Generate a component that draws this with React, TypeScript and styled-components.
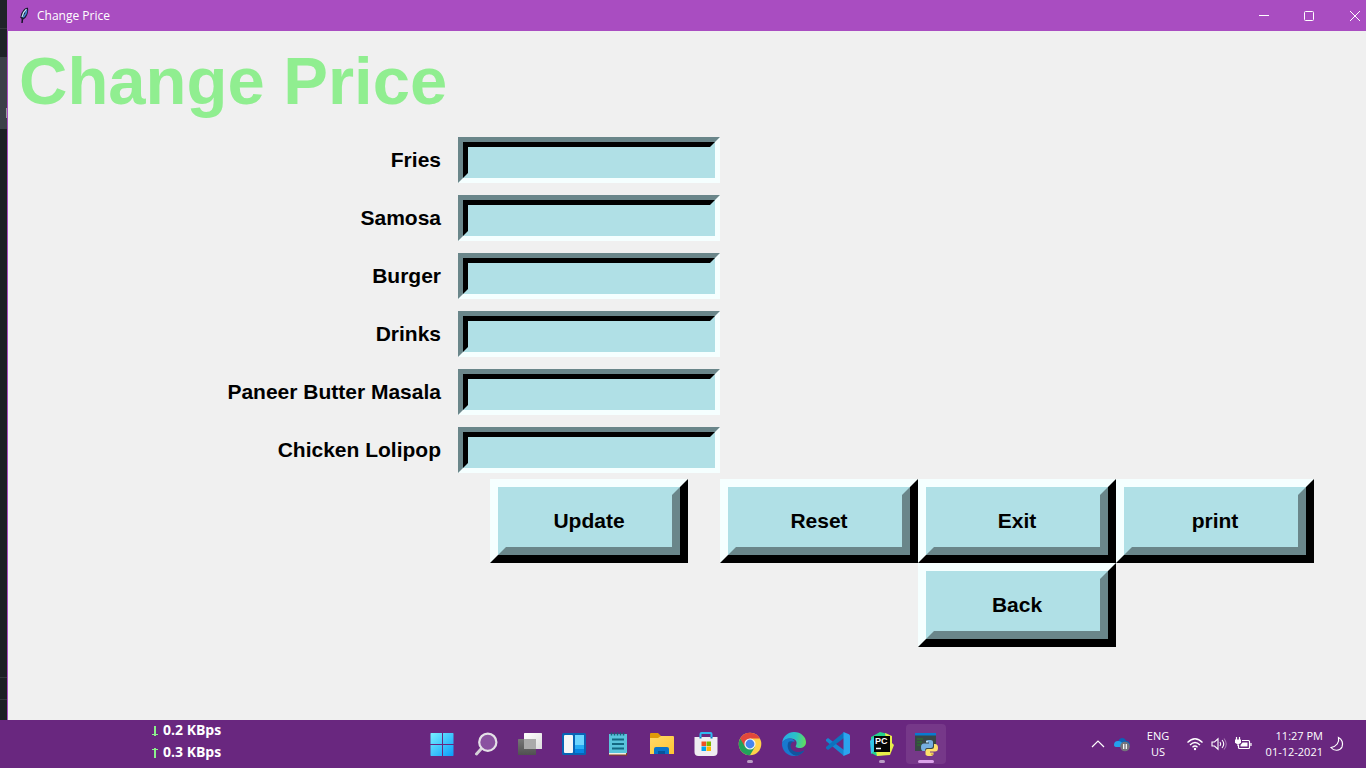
import React from "react";
import styled, { createGlobalStyle } from "styled-components";

const GlobalStyle = createGlobalStyle`
  *, *::before, *::after { box-sizing: border-box; }
  body { margin: 0; font-family: "Open Sans", "Noto Sans", sans-serif; }
  button { font: inherit; color: inherit; cursor: pointer; }
`;

const powder = "#b0e0e6";
const shade = "#6a868a";
const light = "#f5ffff";

const Screen = styled.div`
  display: flex;
  flex-direction: column;
  min-height: 100vh;
  overflow-x: hidden;
`;

const Workspace = styled.div`
  display: flex;
  flex: 1;
`;

const EditorEdge = styled.div`
  display: flex;
  flex-direction: column;
  flex: 0 0 7px;
  background: #1c1f24;
`;

const EdgeBand = styled.div<{ $height?: number; $tone: string; $line?: boolean }>`
  flex: ${(p) => (p.$height ? `0 0 ${p.$height}px` : "1")};
  background: ${(p) => p.$tone};
  border-bottom: 1px solid ${(p) => (p.$line ? "#33363c" : p.$tone)};
`;

const EdgeMark = styled.div`
  width: 1px;
  height: 10px;
  margin: 51px 0 0 6px;
  background: #9b9da2;
`;

const AppWindow = styled.main`
  display: flex;
  flex-direction: column;
  flex: 1;
  min-width: 0;
  background: #f0f0f0;
  border-left: 1px solid #a94dc1;
`;

const TitleBar = styled.header`
  display: flex;
  align-items: center;
  height: 31px;
  padding-left: 10px;
  background: #a94dc1;
  color: #fff;
`;

const WindowName = styled.span`
  flex: 1;
  margin-left: 8px;
  font-size: 12px;
  line-height: 16px;
`;

const WindowButton = styled.button<{ $width: number }>`
  display: flex;
  align-items: center;
  justify-content: center;
  width: ${(p) => p.$width}px;
  height: 31px;
  padding: 0;
  border: 0;
  background: transparent;
`;

const PriceForm = styled.form`
  display: grid;
  grid-template-columns: minmax(0, 450px) 262px repeat(3, 198px);
  font-family: "Liberation Sans", Arial, sans-serif;
  font-weight: bold;
  color: #000;
`;

const Heading = styled.h1`
  grid-column: 1 / -1;
  margin: 0;
  padding-left: 11px;
  font-size: 67px;
  line-height: 100px;
  color: #90ee90;
`;

const FieldLabel = styled.label`
  grid-column: 1;
  padding-right: 17px;
  font-size: 21px;
  line-height: 58px;
  text-align: right;
`;

const SunkenFrame = styled.div`
  grid-column: 2;
  display: flex;
  height: 46px;
  margin: 6px 0;
  border: 5px solid;
  border-color: ${shade} ${light} ${light} ${shade};
`;

const Entry = styled.input`
  flex: 1;
  min-width: 0;
  padding: 0 2px;
  border: 5px solid;
  border-color: #000 ${powder} ${powder} #000;
  border-radius: 0;
  background: ${powder};
  font: inherit;
  font-size: 21px;
  outline: none;
`;

const RaisedButton = styled.button<{ $column: number }>`
  grid-column: ${(p) => p.$column};
  justify-self: center;
  display: flex;
  width: 198px;
  height: 84px;
  padding: 0;
  border: 8px solid;
  border-color: ${light} #000 #000 ${light};
  background: ${powder};
`;

const ButtonFace = styled.span`
  display: flex;
  flex: 1;
  align-self: stretch;
  align-items: center;
  justify-content: center;
  border: 8px solid;
  border-color: ${powder} ${shade} ${shade} ${powder};
  font-size: 21px;
`;

const Taskbar = styled.footer`
  display: grid;
  grid-template-columns: 1fr auto 1fr;
  height: 48px;
  background: #69277f;
  color: #fff;
`;

const NetworkSpeed = styled.div`
  padding-left: 151px;
  font-size: 14px;
  font-weight: bold;
  line-height: 22px;
`;

const SpeedLine = styled.div`
  display: flex;
  align-items: center;
  height: 22px;
  padding-bottom: 2px;
  gap: 4px;
`;

const Apps = styled.nav`
  display: flex;
  padding-left: 2px;
`;

const AppButton = styled.button<{ $active?: boolean }>`
  position: relative;
  display: flex;
  align-items: center;
  justify-content: center;
  width: 44px;
  height: 48px;
  padding: 0;
  border: 0;
  background: transparent;

  &::before {
    content: "";
    display: ${(p) => (p.$active ? "block" : "none")};
    position: absolute;
    inset: 4px 2px 4px 2px;
    border-radius: 4px;
    background: #763889;
    z-index: 0;
  }

  svg { position: relative; }
`;

const RunningMark = styled.span<{ $active?: boolean }>`
  position: absolute;
  bottom: 5px;
  left: 50%;
  width: ${(p) => (p.$active ? 16 : 6)}px;
  height: 3px;
  border-radius: 2px;
  transform: translateX(-50%);
  background: ${(p) => (p.$active ? "#dca2ea" : "#b99cc3")};
`;

const Tray = styled.div`
  display: flex;
  align-items: center;
  justify-content: flex-end;
  padding-right: 15px;
`;

const TrayButton = styled.button<{ $width: number }>`
  display: flex;
  align-items: center;
  justify-content: center;
  width: ${(p) => p.$width}px;
  height: 48px;
  padding: 0;
  border: 0;
  background: transparent;
`;

const TrayText = styled.div<{ $align: "center" | "right"; $width: number }>`
  width: ${(p) => p.$width}px;
  font-size: 11px;
  line-height: 16px;
  text-align: ${(p) => p.$align};
  white-space: nowrap;
`;

const Feather = () => (
  <svg width="11" height="17" viewBox="0 0 11 17" aria-hidden="true">
    <path d="M9.500 1 6.500 2.200 4 6 2.800 10.500l1.200 1.300V16l.8-3.800 2.500-1.700L9 7l.7-4z" fill="#1c2340" stroke="#101020" strokeWidth=".9" />
    <path d="M8.500 2.200 5.600 5.500 4 10" stroke="#c4e7fa" strokeWidth="1.300" fill="none" />
    <path d="M8.700 3.400 7.700 7 5.200 10.400" stroke="#4688dc" strokeWidth="1.500" fill="none" />
  </svg>
);

const Arrow = ({ up }: { up?: boolean }) => (
  <svg width="8" height="12" viewBox="0 0 8 12" aria-hidden="true">
    <path
      d={up ? "M3 12V4H1V3h2V2h2v1h2v1H5v8z" : "M3 2v8H1v1h2v1h2v-1h2v-1H5V2z"}
      fill="#8cf08c"
    />
  </svg>
);

const StartIcon = () => (
  <svg width="24" height="24" viewBox="0 0 24 24" aria-hidden="true">
    <defs>
      <linearGradient id="start" x1="0" y1="0" x2="24" y2="24" gradientUnits="userSpaceOnUse">
        <stop stopColor="#7cf3ff" />
        <stop offset="1" stopColor="#089bfa" />
      </linearGradient>
    </defs>
    <path d="M1 1h11v11H.5V1.500zM13 1h10l.5.500V12H13zM.5 13H12v11H1l-.5-.5zM13 13h10.500v10.500l-.5.500H13z" fill="url(#start)" />
  </svg>
);

const SearchIcon = () => (
  <svg width="24" height="24" viewBox="0 0 24 24" aria-hidden="true">
    <path d="M7.500 16.500 2.500 22" stroke="#d5d0d8" strokeWidth="3" strokeLinecap="round" />
    <circle cx="13.800" cy="10.200" r="8.600" fill="#8a52a0" stroke="#e4e1e7" strokeWidth="2.200" />
  </svg>
);

const TaskViewIcon = () => (
  <svg width="26" height="24" viewBox="0 0 26 24" aria-hidden="true">
    <defs>
      <linearGradient id="tvback" x2="0" y2="1">
        <stop stopColor="#777" />
        <stop offset="1" stopColor="#505050" />
      </linearGradient>
      <linearGradient id="tvfront" x2="1" y2="1">
        <stop stopColor="#fff" />
        <stop offset="1" stopColor="#dcdcdc" />
      </linearGradient>
    </defs>
    <rect x="7" y="1" width="18" height="16" rx=".6" fill="url(#tvfront)" />
    <rect x="1" y="7" width="18" height="16" rx=".6" fill="url(#tvback)" />
    <path d="M7 7h12v10H7z" fill="#aaa" />
  </svg>
);

const WidgetsIcon = () => (
  <svg width="24" height="24" viewBox="0 0 24 24" aria-hidden="true">
    <rect y="1" width="24" height="22" rx="1.500" fill="#0864b5" />
    <rect x="2" y="3" width="9" height="18" rx="1" fill="#f6f6f6" />
    <path d="M13 3h9v10h-9z" fill="#6cd5ff" />
    <path d="M13 13h9v4h-9z" fill="#25adf5" />
    <path d="M13 17h9v4h-9z" fill="#0685e4" />
  </svg>
);

const NotepadIcon = () => (
  <svg width="20" height="24" viewBox="0 0 20 24" aria-hidden="true">
    <path d="M1 20h18v3.500H1z" fill="#8b4916" />
    <path d="M1 20h17v2.500H1z" fill="#f2eee8" />
    <path d="M1 2h18v19H1z" fill="#59c5dc" />
    <path d="M3.500.500v3M6.500.500v3M9.500.500v3M12.500.500v3M15.500.500v3" stroke="#17627a" strokeWidth="1.500" />
    <path d="M4 7.500h12M4 12h12M4 16.500h12" stroke="#136982" strokeWidth="1.800" />
  </svg>
);

const FolderIcon = () => (
  <svg width="26" height="24" viewBox="0 0 26 24" aria-hidden="true">
    <defs>
      <linearGradient id="folder" x2="1" y2="1">
        <stop stopColor="#ffda69" />
        <stop offset="1" stopColor="#ffc432" />
      </linearGradient>
    </defs>
    <path d="M1 2q0-1 1-1h7l3 3v8H1z" fill="#e09a08" />
    <path d="M1 6h8l3-2h12q1 0 1 1v17H1z" fill="url(#folder)" />
    <path d="M5 22v-5q0-2 2-2h11q2 0 2 2v5z" fill="#0974ca" />
    <path d="M9 19h7v3H9z" fill="#07539c" />
  </svg>
);

const StoreIcon = () => (
  <svg width="24" height="24" viewBox="0 0 24 24" aria-hidden="true">
    <path d="M6.500 6V2q0-1 1-1h9q1 0 1 1v4" fill="none" stroke="#2fb8f0" strokeWidth="2" />
    <path d="M.500 5h23v15q0 4-4 4h-15q-4 0-4-4z" fill="#efedf1" />
    <path d="M7.500 9.500H12V14H7.500z" fill="#f05124" />
    <path d="M12.500 9.500H17V14h-4.500z" fill="#7cb700" />
    <path d="M7.500 14.500H12V19H7.500z" fill="#00a3ee" />
    <path d="M12.500 14.500H17V19h-4.500z" fill="#ffb800" />
    <path d="M6.500 5v1.500M17.500 5v1.500" stroke="#087dc1" strokeWidth="2" />
  </svg>
);

const ChromeIcon = () => (
  <svg width="24" height="24" viewBox="0 0 24 24" aria-hidden="true">
    <circle cx="12" cy="12" r="11.300" fill="#fed14a" />
    <path d="M12 12 2.200 6.400A11.300 11.300 0 0 0 12 23.300l5-8.600z" fill="#22a25b" />
    <path d="M12 6.500h9.900A11.300 11.300 0 0 0 2.200 6.400L7 14.700z" fill="#e1483b" />
    <circle cx="12" cy="12" r="5.600" fill="#f4f4f4" />
    <circle cx="12" cy="12" r="4.400" fill="#4685ef" />
  </svg>
);

const EdgeIcon = () => (
  <svg width="26" height="26" viewBox="0 0 26 26" aria-hidden="true">
    <defs>
      <linearGradient id="edgetop" x1="1" y1="8" x2="25" y2="12" gradientUnits="userSpaceOnUse">
        <stop stopColor="#28a9e9" />
        <stop offset=".55" stopColor="#2bc2c4" />
        <stop offset="1" stopColor="#65df58" />
      </linearGradient>
    </defs>
    <path d="M1 12C2 5 7 1 13 1c7 0 12 5 12 10 0 4-3 6-6.500 6-3 0-4.500-1-3.500-2.500 2-4-1-7-5-7C6 7.500 2 9.500 1 12z" fill="url(#edgetop)" />
    <path d="M1 12c1-3 5-5 8-4.500 2 0 4 1.300 5 3-3-.5-5 1.500-5 4.500 0 4 4 7 8.500 6.500 2 0 4-.8 5.500-2C21 23 17 25 13 25 6 25 .500 19 1 12z" fill="#1879cf" />
    <path d="M7.500 11C5 16 8 23 15 24.800c4-.5 7-3 8.500-5.600-7 4-14 .8-14-4.200 0-2 .8-3.500 2.500-4.300-1.500-.7-3.500-.5-4.500.3z" fill="#12549e" />
  </svg>
);

const CodeIcon = () => (
  <svg width="26" height="26" viewBox="0 0 26 26" aria-hidden="true">
    <path d="m1 8.500 2-1.500 16 12v6L1 10z" fill="#1686d2" />
    <path d="m1 17.500 2 1.500L19 7V1L1 16z" fill="#0d72bd" />
    <path d="m18.500 1 5.500 2.300q1 .5 1 1.500v16.400q0 1-1 1.500L18.500 25z" fill="#2ba4ee" />
  </svg>
);

const PyCharmIcon = () => (
  <svg width="26" height="26" viewBox="0 0 26 26" aria-hidden="true">
    <path d="M2 6 11 1l8 2 4 7-3 13-12 2-6-3z" fill="#24d28c" />
    <path d="m16 2 7 3v7l2 2-4 10-13 1-1-5 11-6z" fill="#e7ed4a" />
    <path d="M1 10 5 6v14l-3 3z" fill="#32c6e7" />
    <path d="M5 5h16v16H5z" fill="#050505" />
    <text x="6" y="12.500" fill="#fff" fontFamily="Liberation Sans, sans-serif" fontSize="9" fontWeight="bold">PC</text>
    <path d="M7 17.500h5" stroke="#fff" strokeWidth="1.500" />
  </svg>
);

const PythonConsoleIcon = () => (
  <svg width="24" height="24" viewBox="0 0 24 24" aria-hidden="true">
    <path d="M1 1h21v18H1z" fill="#394747" />
    <path d="M1 1h21v2.500H1z" fill="#087bd0" />
    <path d="M3 7h6M3 10h5M3 13h4" stroke="#287c2b" strokeWidth="1" />
    <path d="M15 8q4-.5 4 2v4q0 2-2 2h-4q-2 0-2 3H9q-2 0-2-4 0-3.500 3-3.500h5v-1h-3V9q0-1 3-1z" fill="#76afe1" />
    <path d="M20 12h1q3 0 3 4 0 3.500-3 3.500h-5v1h3.500V22q0 2-4 2t-4-2v-3q0-2 2-2h4q2.500 0 2.500-2.500z" fill="#ffe06b" />
    <circle cx="13" cy="9.800" r=".7" fill="#fff" />
    <circle cx="18" cy="22.200" r=".7" fill="#a97420" />
  </svg>
);

const CloudIcon = () => (
  <svg width="18" height="16" viewBox="0 0 18 16" aria-hidden="true">
    <path d="M5 6c1-5 7-5 8-1 3 0 4 2 4 4l-6 3-7-3z" fill="#0c62b7" />
    <path d="M1 9q0-4 4-4c3 0 4 2 6 3l2 3H4Q1 11 1 9z" fill="#23a1ed" />
    <circle cx="12" cy="10.500" r="4.800" fill="#74737c" />
    <path d="M10.700 8v5M13.300 8v5" stroke="#fff" strokeWidth="1.200" />
  </svg>
);

const WifiIcon = () => (
  <svg width="18" height="14" viewBox="0 0 18 14" fill="none" stroke="#fff" strokeWidth="1.300" aria-hidden="true">
    <path d="M1.500 5.500q7.500-7.500 15 0M4 8q5-5 10 0M6.500 10.300q2.500-2.500 5 0" />
    <circle cx="9" cy="12" r="1.200" fill="#fff" stroke="none" />
  </svg>
);

const SpeakerIcon = () => (
  <svg width="18" height="14" viewBox="0 0 18 14" fill="none" stroke="#fff" strokeWidth="1.100" aria-hidden="true">
    <path d="M2 5h2.500L8 1.800v10.400L4.500 9H2zM10 5q1.500 2 0 4M12 3q3.500 4 0 8" />
    <path d="M14 1.500q4.500 5.500 0 11" stroke="#a477b1" />
  </svg>
);

const BatteryIcon = () => (
  <svg width="18" height="14" viewBox="0 0 18 14" fill="none" stroke="#fff" strokeWidth="1.200" aria-hidden="true">
    <path d="M8 3.500h6.500q1 0 1 1v6q0 1-1 1h-9q-1 0-1-1V8M17 6v3" />
    <path d="M8.500 5.500h5v4h-7V8z" fill="#fff" stroke="none" />
    <path d="M2.500 0v3M5.500 0v3M4 6v3" />
    <path d="M1 2.500h6v3Q6 7 4 7T1 5.500z" fill="#fff" stroke="none" />
  </svg>
);

const MoonIcon = () => (
  <svg width="16" height="16" viewBox="0 0 16 16" fill="none" stroke="#fff" strokeWidth="1.200" aria-hidden="true">
    <path d="M9.500 1.500c1 5-2 9-7.500 10 3 4 9 3.500 11-.5 1.500-3.500 0-8-3.500-9.500z" />
  </svg>
);

const items = ["Fries", "Samosa", "Burger", "Drinks", "Paneer Butter Masala", "Chicken Lolipop"];

const actions: { text: string; column: number; type: "button" | "submit" | "reset" }[] = [
  { text: "Update", column: 2, type: "submit" },
  { text: "Reset", column: 3, type: "reset" },
  { text: "Exit", column: 4, type: "button" },
  { text: "print", column: 5, type: "button" },
  { text: "Back", column: 4, type: "button" },
];

const apps: { name: string; Icon: () => React.JSX.Element; running?: boolean; active?: boolean }[] = [
  { name: "Start", Icon: StartIcon },
  { name: "Search", Icon: SearchIcon },
  { name: "Task view", Icon: TaskViewIcon },
  { name: "Widgets", Icon: WidgetsIcon },
  { name: "Notepad", Icon: NotepadIcon },
  { name: "File Explorer", Icon: FolderIcon },
  { name: "Microsoft Store", Icon: StoreIcon },
  { name: "Chrome", Icon: ChromeIcon, running: true },
  { name: "Edge", Icon: EdgeIcon },
  { name: "Visual Studio Code", Icon: CodeIcon },
  { name: "PyCharm", Icon: PyCharmIcon, running: true },
  { name: "Python", Icon: PythonConsoleIcon, running: true, active: true },
];

export default function App() {
  return (
    <Screen>
      <GlobalStyle />
      <Workspace>
        <EditorEdge>
          <EdgeBand $height={29} $tone="#202328" $line />
          <EdgeBand $height={28} $tone="#1f2227" />
          <EdgeBand $height={72} $tone="#3c3f48">
            <EdgeMark />
          </EdgeBand>
          <EdgeBand $tone="#1c1f24" $line />
          <EdgeBand $height={22} $tone="#1c1f24" $line />
          <EdgeBand $height={20} $tone="#1c1f24" />
        </EditorEdge>
        <AppWindow>
          <TitleBar>
            <Feather />
            <WindowName>Change Price</WindowName>
            <WindowButton type="button" aria-label="Minimize" $width={44}>
              <svg width="10" height="10" viewBox="0 0 10 10"><path d="M0 4.500h10" stroke="#fff" /></svg>
            </WindowButton>
            <WindowButton type="button" aria-label="Maximize" $width={46}>
              <svg width="10" height="10" viewBox="0 0 10 10"><rect x=".5" y=".5" width="9" height="9" rx="1" fill="none" stroke="#fff" /></svg>
            </WindowButton>
            <WindowButton type="button" aria-label="Close" $width={34}>
              <svg width="24" height="10" viewBox="-12 0 24 10"><path d="m1 0 10 10M11 0 1 10" stroke="#fff" /></svg>
            </WindowButton>
          </TitleBar>
          <PriceForm onSubmit={(e) => e.preventDefault()}>
            <Heading>Change Price</Heading>
            {items.map((item, i) => (
              <React.Fragment key={item}>
                <FieldLabel htmlFor={`price-${i}`}>{item}</FieldLabel>
                <SunkenFrame>
                  <Entry id={`price-${i}`} type="text" />
                </SunkenFrame>
              </React.Fragment>
            ))}
            {actions.map((a) => (
              <RaisedButton key={a.text} type={a.type} $column={a.column}>
                <ButtonFace>{a.text}</ButtonFace>
              </RaisedButton>
            ))}
          </PriceForm>
        </AppWindow>
      </Workspace>
      <Taskbar>
        <NetworkSpeed>
          <SpeedLine><Arrow />0.2 KBps</SpeedLine>
          <SpeedLine><Arrow up />0.3 KBps</SpeedLine>
        </NetworkSpeed>
        <Apps aria-label="Apps">
          {apps.map(({ name, Icon, running, active }) => (
            <AppButton key={name} type="button" aria-label={name} $active={active}>
              <Icon />
              {running && <RunningMark $active={active} />}
            </AppButton>
          ))}
        </Apps>
        <Tray>
          <TrayButton type="button" aria-label="Hidden icons" $width={24}>
            <svg width="14" height="10" viewBox="0 0 14 10"><path d="m1 8 6-6 6 6" fill="none" stroke="#fff" strokeWidth="1.200" /></svg>
          </TrayButton>
          <TrayButton type="button" aria-label="OneDrive" $width={24}><CloudIcon /></TrayButton>
          <TrayText $align="center" $width={48}>ENG<br />US</TrayText>
          <TrayButton type="button" aria-label="Network" $width={26}><WifiIcon /></TrayButton>
          <TrayButton type="button" aria-label="Volume" $width={22}><SpeakerIcon /></TrayButton>
          <TrayButton type="button" aria-label="Battery" $width={26}><BatteryIcon /></TrayButton>
          <TrayText $align="right" $width={67}>11:27 PM<br />01-12-2021</TrayText>
          <TrayButton type="button" aria-label="Notifications" $width={28}><MoonIcon /></TrayButton>
        </Tray>
      </Taskbar>
    </Screen>
  );
}
